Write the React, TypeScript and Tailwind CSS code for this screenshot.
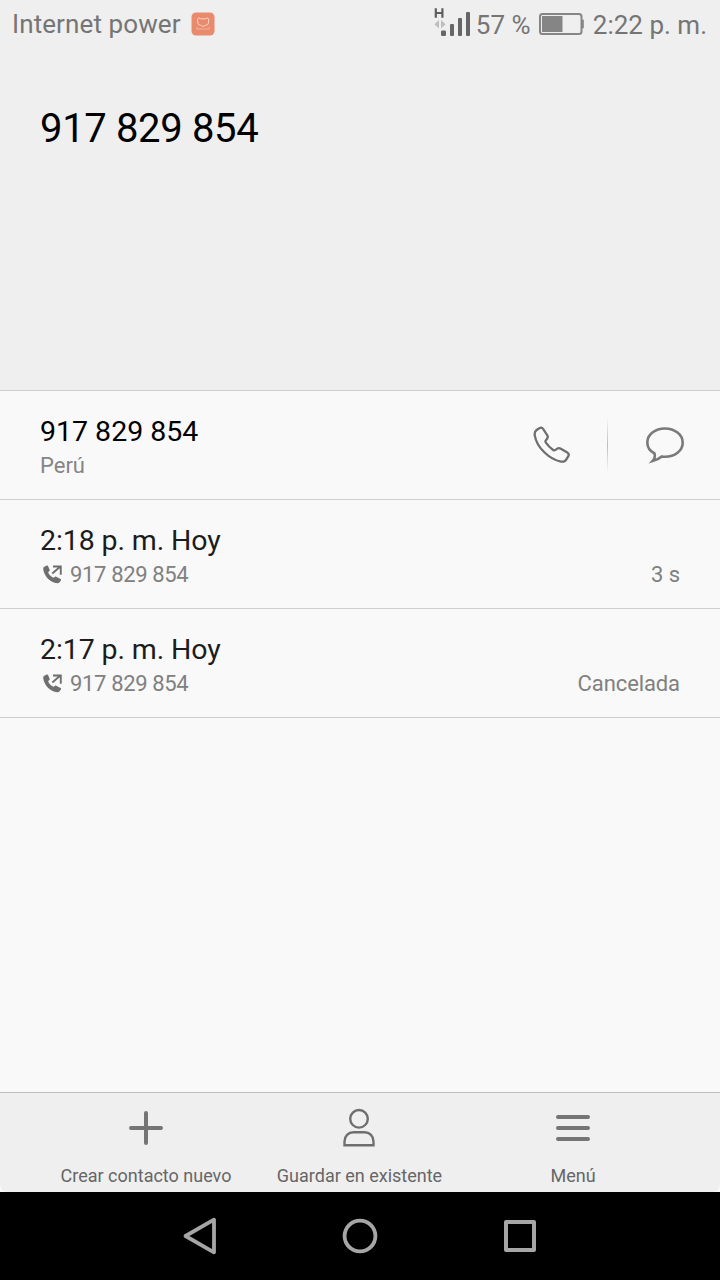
type IconProps = { className?: string }

function AppBadgeIcon({ className }: IconProps) {
  return (
    <svg viewBox="0 0 24 24" className={className} fill="none" aria-hidden>
      <rect x="0.5" y="0.5" width="23" height="23" rx="4.5" fill="#e98a6d" />
      <path
        d="M7.800 6C9.500 7.300 14.800 7.300 16.500 6L17.900 7.200 17.200 11.800C17 12.900 15.800 13 14.800 13.100 14 14.600 10.300 14.600 9.500 13.100 8.500 13 7.300 12.900 7.100 11.800L6.400 7.200Z"
        stroke="#fbd9cd"
        strokeWidth="1"
      />
      <path d="M5.800 14.800v2.200h12.400v-2.200" stroke="#f4b8a5" strokeWidth="0.900" />
    </svg>
  )
}

function SignalIcon({ className }: IconProps) {
  return (
    <svg viewBox="0 0 38 32" className={className} aria-hidden>
      <path d="M1.800 0.300v9.500M8.400 0.300v9.500M2 5h6.300" stroke="#5f5f5f" strokeWidth="2.200" fill="none" />
      <path d="M5 12v8.500L0.300 16.200ZM7 12v8.500L11.600 16.200Z" fill="#bfbfbf" />
      <g fill="#666">
        <rect x="7" y="22.500" width="5" height="5.500" rx="1.200" />
        <rect x="16" y="16" width="4" height="12" rx="1" />
        <rect x="24" y="10" width="4" height="18" rx="1" />
        <rect x="32" y="4" width="4" height="24" rx="1" />
      </g>
    </svg>
  )
}

function BatteryIcon({ className }: IconProps) {
  return (
    <svg viewBox="0 0 46 24" className={className} aria-hidden>
      <rect x="1" y="2" width="41.500" height="20" rx="2.500" fill="none" stroke="#858585" strokeWidth="2" />
      <rect x="3" y="4" width="20.500" height="16" fill="#858585" />
      <rect x="43" y="7.500" width="1.800" height="9" rx="0.800" fill="#858585" />
    </svg>
  )
}

function PhoneIcon({ className }: IconProps) {
  return (
    <svg viewBox="0 0 38 38" className={className} fill="none" stroke="#6f6f6f" strokeWidth="2.300" strokeLinejoin="round" aria-hidden>
      <path d="M1.800 9.600C1.300 7 2 5.200 3.600 4L6.300 2.200C7.800 1.300 9.300 1.600 10.200 3L14.300 9.300C15 10.400 14.900 11.500 14.200 12.500L12.700 14.600C12.300 15.400 12.400 16 12.900 16.700 14.800 19.600 17.300 22 20.200 24 20.900 24.500 21.500 24.500 22.200 24.100L24.300 22.600C25.300 21.900 26.400 21.900 27.400 22.500L34.300 26.500C35.800 27.400 36.100 28.700 35.300 30.100L33.400 33.300C32.200 35.300 30.400 36 28 35.600 16.500 33.500 3.800 21.500 1.800 9.600Z" />
    </svg>
  )
}

function MessageIcon({ className }: IconProps) {
  return (
    <svg viewBox="0 0 40 38" className={className} fill="none" stroke="#7a7a7a" strokeWidth="2.600" aria-hidden>
      <path d="M9.500 27.500C4.900 25 2.300 21.200 2.300 16.700 2.300 8.700 10 2.500 19.900 2.500S37.700 8.700 37.700 16.700 29.800 30.800 19.900 30.800c-1 0-2-.1-3.100-.3-1.900 1.700-4.500 3.200-9.300 4.500 2-2.200 2.800-4.900 2-7.500Z" />
    </svg>
  )
}

function OutgoingCallIcon({ className }: IconProps) {
  return (
    <svg viewBox="0 0 20 20" className={className} aria-hidden>
      <path
        d="M1 2 3.900.6c.6-.3 1.100-.1 1.400.5l1.700 4c.2.500.1.900-.3 1.300L5.400 7.600c.9 2.400 2.900 4.500 5.600 5.900l1.500-1c.4-.3.8-.4 1.300-.1l4.700 2.400c.6.300.7.800.3 1.400l-1.600 2.200c-.5.700-1.200.9-2.100.8C7.400 18.700.7 11.400.2 3.700.1 2.900.4 2.300 1 2Z"
        fill="#6f6f6f"
      />
      <path d="M9.800 9 18 1.800M10.500 1.600h8.200v8.600" fill="none" stroke="#6f6f6f" strokeWidth="2" />
    </svg>
  )
}

function PlusIcon({ className }: IconProps) {
  return (
    <svg viewBox="0 0 40 40" className={className} stroke="#757575" strokeWidth="4" strokeLinecap="round" aria-hidden>
      <path d="M20 5v30M5 20h30" />
    </svg>
  )
}

function PersonIcon({ className }: IconProps) {
  return (
    <svg viewBox="0 0 40 40" className={className} fill="none" stroke="#6f6f6f" strokeWidth="2.400" aria-hidden>
      <circle cx="19" cy="10.800" r="8.800" />
      <path d="M4.500 37.300V33.500c0-5.500 3.800-9.200 9-9.200h11c5.200 0 9 3.700 9 9.200v3.800Z" />
    </svg>
  )
}

function MenuIcon({ className }: IconProps) {
  return (
    <svg viewBox="0 0 40 40" className={className} stroke="#757575" strokeWidth="4" strokeLinecap="round" aria-hidden>
      <path d="M5 9h30M5 20h30M5 31h30" />
    </svg>
  )
}

const calls = [
  { time: '2:18 p. m. Hoy', number: '917 829 854', result: '3 s' },
  { time: '2:17 p. m. Hoy', number: '917 829 854', result: 'Cancelada' },
]

const actions = [
  { label: 'Crear contacto nuevo', Icon: PlusIcon },
  { label: 'Guardar en existente', Icon: PersonIcon },
  { label: 'Menú', Icon: MenuIcon },
]

function StatusBar() {
  return (
    <div className="flex h-12 items-center pr-[13px] pl-3 text-[26px] whitespace-nowrap text-[#757575]">
      <span className="w-[179px] pt-px tracking-[0.1px]">Internet power</span>
      <AppBadgeIcon className="size-6" />
      <div className="flex-1" />
      <SignalIcon className="h-8 w-[38px]" />
      <span className="ml-1 w-[63px] pt-0.5">57 %</span>
      <BatteryIcon className="h-6 w-[46px]" />
      <span className="ml-2 pt-0.5">2:22 p. m.</span>
    </div>
  )
}

function ContactRow() {
  return (
    <div className="flex h-[109px] items-center border-b border-[#cfcfcf] pl-10">
      <div className="flex-1 pt-1.5">
        <p className="text-[28.500px] leading-9 text-black">917 829 854</p>
        <p className="text-[22px] leading-8 text-[#858585]">Perú</p>
      </div>
      <button type="button" aria-label="Llamar" className="mr-9">
        <PhoneIcon className="size-[38px]" />
      </button>
      <div className="h-14 w-px bg-linear-to-b from-transparent via-[#bdbdbd] to-transparent" />
      <button type="button" aria-label="Mensaje" className="mr-[35px] ml-[37px]">
        <MessageIcon className="h-[38px] w-10" />
      </button>
    </div>
  )
}

function CallRow({ time, number, result }: (typeof calls)[number]) {
  return (
    <div className="flex h-[109px] flex-col justify-center border-b border-[#cfcfcf] px-10 pt-1.5">
      <p className="text-[28.500px] leading-9 tracking-[-0.1px] text-[#1c1c1c]">{time}</p>
      <div className="flex items-center text-[22px] leading-8 text-[#808080]">
        <OutgoingCallIcon className="mr-2 mb-0.5 ml-[3px] size-[19px]" />
        <span className="tracking-[-0.35px]">{number}</span>
        <span className="ml-auto tracking-[-0.1px]">{result}</span>
      </div>
    </div>
  )
}

function NavigationBar() {
  return (
    <div className="flex h-[88px] items-center justify-center gap-[120px] bg-black">
      <svg viewBox="0 0 40 40" className="size-10" fill="none" stroke="#a6a6a6" strokeWidth="3.800" strokeLinejoin="round" aria-hidden>
        <path d="M34 3.700v32.600L5.500 20Z" />
      </svg>
      <svg viewBox="0 0 40 40" className="size-10" fill="none" stroke="#a6a6a6" strokeWidth="3.800" aria-hidden>
        <circle cx="20" cy="20" r="15.400" />
      </svg>
      <svg viewBox="0 0 40 40" className="size-10" fill="none" stroke="#a6a6a6" strokeWidth="4" strokeLinejoin="round" aria-hidden>
        <rect x="6" y="6" width="28" height="28" />
      </svg>
    </div>
  )
}

export default function App() {
  return (
    <div className="flex h-[1280px] w-[720px] flex-col overflow-hidden bg-[#f9f9f9] font-['Roboto',sans-serif]">
      <header className="h-[391px] border-b border-[#cfcfcf] bg-[#efefef]">
        <StatusBar />
        <h1 className="mt-[53px] ml-10 text-[40px] leading-14 tracking-[-0.35px] text-black">917 829 854</h1>
      </header>

      <main className="flex-1">
        <ContactRow />
        {calls.map((call) => (
          <CallRow key={call.time} {...call} />
        ))}
      </main>

      <div className="flex h-[100px] justify-center rounded-b-lg border-t border-[#bfbfbf] bg-[#efefef] pr-px">
        {actions.map(({ label, Icon }) => (
          <button key={label} type="button" className="flex w-[213.500px] flex-col items-center pt-[15px]">
            <Icon className="size-10" />
            <span className="mt-4 text-[18px] leading-6 whitespace-nowrap text-[#666]">{label}</span>
          </button>
        ))}
      </div>
      <NavigationBar />
    </div>
  )
}
